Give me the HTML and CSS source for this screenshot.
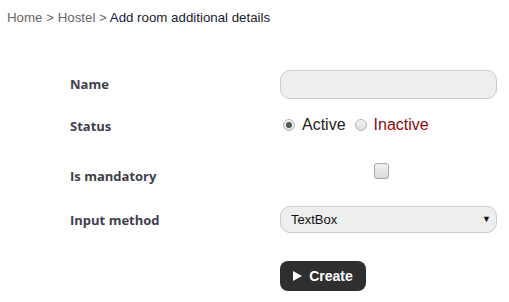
FILE: index.html
```html
<!DOCTYPE html>
<html lang="en">
<head>
    <meta charset="UTF-8">
    <meta name="viewport" content="width=device-width, initial-scale=1.0">
    <title>Add room additional details</title>
    <link rel="stylesheet" href="styles.css">
</head>
<body>
    <div class="crumbs">
        <a href="#">Home</a> &gt; <a href="#">Hostel</a> &gt; <span class="current">Add room additional details</span>
    </div>
    <form class="details-form">
        <div class="form-row row-name">
            <label class="field-label" for="name">Name</label>
            <div class="field">
                <input type="text" id="name" class="text-input">
            </div>
        </div>

        <div class="form-row row-status">
            <div class="field-label">Status</div>
            <div class="field status-group">
                <label class="radio-label"><input type="radio" name="status" value="active" checked> Active</label>
                <label class="radio-label inactive"><input type="radio" name="status" value="inactive"> Inactive</label>
            </div>
        </div>

        <div class="form-row row-mandatory">
            <label class="field-label" for="mandatory">Is mandatory</label>
            <div class="field">
                <input type="checkbox" id="mandatory" class="check">
            </div>
        </div>

        <div class="form-row row-method">
            <label class="field-label" for="method">Input method</label>
            <div class="field">
                <div class="select-wrap">
                    <select id="method" class="select-input">
                        <option>TextBox</option>
                        <option>DropDown</option>
                        <option>CheckBox</option>
                    </select>
                    <span class="select-arrow">&#9660;</span>
                </div>
            </div>
        </div>

        <div class="form-row row-submit">
            <div class="field-label"></div>
            <div class="field">
                <button type="submit" class="create-btn">
                    <svg class="play-icon" width="9" height="10" viewBox="0 0 9 10"><polygon points="0,0 9,5 0,10" fill="#fff"/></svg>
                    Create
                </button>
            </div>
        </div>
    </form>
</body>
</html>
```
FILE: styles.css
```css
body {
    margin: 0;
    font-family: Arial, "Liberation Sans", sans-serif;
    background: #fff;
    color: #222;
}
.crumbs {
    padding: 10px 7px 0;
    font-size: 13.3px;
    line-height: 15px;
    color: #666;
}
.crumbs a {
    color: #666;
    text-decoration: none;
}
.crumbs .current {
    color: #1b1b2a;
}
.details-form {
    padding-left: 70px;
    margin-top: 45px;
}
.form-row {
    display: flex;
    align-items: center;
}
.row-name {
    height: 29px;
    margin-bottom: 15px;
}
.row-status {
    height: 22px;
    margin-bottom: 26px;
}
.row-mandatory {
    height: 24px;
    margin-bottom: 20px;
    align-items: stretch;
}
.row-method {
    height: 27px;
    margin-bottom: 28px;
}
.row-submit {
    height: 30px;
}
.field-label {
    width: 210px;
    flex-shrink: 0;
    font-family: "Open Sans", Arial, sans-serif;
    font-weight: bold;
    font-size: 13px;
    color: #3f3f4c;
}
.row-name .field-label {
    margin-top: -2px;
}
.row-status .field-label {
    margin-top: 2px;
}
.row-mandatory .field-label {
    align-self: flex-end;
    padding-bottom: 1px;
}
.field {
    width: 217px;
    display: flex;
    align-items: center;
}
.row-mandatory .field {
    align-items: flex-start;
}
.text-input {
    width: 100%;
    height: 29px;
    box-sizing: border-box;
    border: 1px solid #ccc;
    border-radius: 10px;
    background: #eee;
    padding: 0 10px;
    font-size: 13px;
    outline: none;
}
.status-group {
    gap: 6px;
    font-size: 16px;
}
.radio-label {
    display: flex;
    align-items: center;
    color: #222;
}
.radio-label.inactive {
    color: #8b0a0a;
}
.radio-label input {
    appearance: none;
    -webkit-appearance: none;
    width: 12px;
    height: 12px;
    margin: 0 7px 0 3px;
    border: 1px solid #b5b5b5;
    border-radius: 50%;
    background: linear-gradient(#f4f4f4, #dcdcdc);
    box-sizing: border-box;
    position: relative;
}
.radio-label input:checked::after {
    content: "";
    position: absolute;
    left: 2px;
    top: 2px;
    width: 6px;
    height: 6px;
    border-radius: 50%;
    background: #555;
}
.check {
    appearance: none;
    -webkit-appearance: none;
    width: 15px;
    height: 16px;
    margin: 1px 0 0 94px;
    border: 1px solid #a9a9a9;
    border-radius: 3px;
    background: linear-gradient(#f2f2f2, #d9d9d9);
    box-sizing: border-box;
}
.select-wrap {
    position: relative;
    width: 100%;
}
.select-input {
    appearance: none;
    -webkit-appearance: none;
    width: 100%;
    height: 27px;
    box-sizing: border-box;
    border: 1px solid #ccc;
    border-radius: 10px;
    background: #eee;
    padding: 0 10px;
    font-family: Arial, "Liberation Sans", sans-serif;
    font-size: 13px;
    color: #111;
    outline: none;
}
.select-arrow {
    position: absolute;
    right: 6px;
    top: 8px;
    font-size: 9px;
    color: #111;
    pointer-events: none;
}
.create-btn {
    width: 86px;
    height: 30px;
    border: none;
    border-radius: 8px;
    background: #2f2f30;
    color: #fff;
    font-family: Arial, "Liberation Sans", sans-serif;
    font-weight: bold;
    font-size: 14px;
    cursor: pointer;
    display: flex;
    align-items: center;
    justify-content: center;
    gap: 7px;
    padding: 0;
}
```
